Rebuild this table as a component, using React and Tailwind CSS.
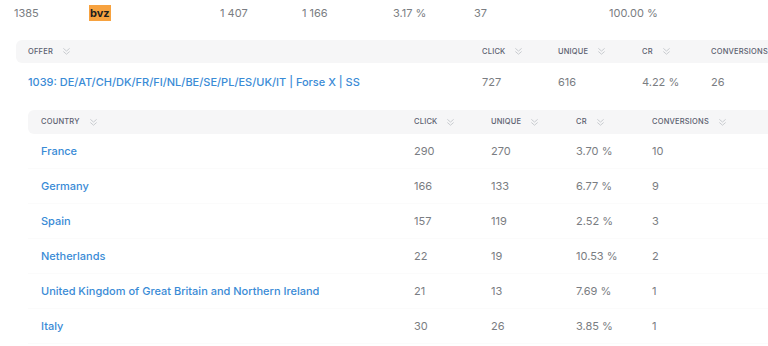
import React from 'react';

const SortIcon = () => (
  <svg className="w-[9px] h-[9px] ml-[9px] text-[#c4c7cc]" viewBox="0 0 10 10" fill="none" stroke="currentColor" strokeWidth={1}>
    <polyline points="1.5,1.5 5,4.5 8.5,1.5" />
    <polyline points="1.5,5 5,8 8.5,5" />
  </svg>
);

const Head = ({ label, className = '' }) => (
  <div className={`flex items-center ${className}`}>
    <span>{label}</span>
    <SortIcon />
  </div>
);

const countries = [
  { name: 'France', click: 290, unique: 270, cr: '3.70 %', conv: 10 },
  { name: 'Germany', click: 166, unique: 133, cr: '6.77 %', conv: 9 },
  { name: 'Spain', click: 157, unique: 119, cr: '2.52 %', conv: 3 },
  { name: 'Netherlands', click: 22, unique: 19, cr: '10.53 %', conv: 2 },
  { name: 'United Kingdom of Great Britain and Northern Ireland', click: 21, unique: 13, cr: '7.69 %', conv: 1 },
  { name: 'Italy', click: 30, unique: 26, cr: '3.85 %', conv: 1 },
];

export default function App() {
  return (
    <div className="w-[768px] h-[346px] overflow-hidden bg-white font-['Inter',sans-serif] text-[11px] text-[#7a7d82]">
      {/* parent row */}
      <div className="flex items-center h-[27px]">
        <div className="w-[89px] pl-[14px]">1385</div>
        <div className="w-[131px]">
          <span className="bg-[#f7a23f] text-[#1d1d1d] font-bold px-[1px] py-[1px]">bvz</span>
        </div>
        <div className="w-[82px]">1 407</div>
        <div className="w-[91px]">1 166</div>
        <div className="w-[81px]">3.17 %</div>
        <div className="w-[135px]">37</div>
        <div>100.00 %</div>
      </div>

      <div className="pl-[16px] pt-[13px]">
        {/* offer table header */}
        <div className="flex items-center h-[23px] bg-[#f6f6f7] rounded-l-[6px] pl-[12px] text-[7.5px] font-medium tracking-[0.2px] text-[#5b6070] whitespace-nowrap">
          <Head label="OFFER" className="w-[454px]" />
          <Head label="CLICK" className="w-[76px]" />
          <Head label="UNIQUE" className="w-[84px]" />
          <Head label="CR" className="w-[69px]" />
          <div>CONVERSIONS</div>
        </div>
        {/* offer row */}
        <div className="flex items-center h-[38px] pl-[12px]">
          <div className="w-[454px] text-[#3a8bd6] font-medium">1039: DE/AT/CH/DK/FR/FI/NL/BE/SE/PL/ES/UK/IT | Forse X | SS</div>
          <div className="w-[76px]">727</div>
          <div className="w-[84px]">616</div>
          <div className="w-[69px]">4.22 %</div>
          <div>26</div>
        </div>

        {/* country table */}
        <div className="pl-[12px] pt-[9px]">
          <div className="flex items-center h-[24px] bg-[#f6f6f7] rounded-l-[6px] pl-[13px] text-[7.5px] font-medium tracking-[0.2px] text-[#5b6070] whitespace-nowrap">
            <Head label="COUNTRY" className="w-[373px]" />
            <Head label="CLICK" className="w-[77px]" />
            <Head label="UNIQUE" className="w-[85px]" />
            <Head label="CR" className="w-[76px]" />
            <Head label="CONVERSIONS" />
          </div>
          {countries.map((c) => (
            <div key={c.name} className="flex items-center h-[35px] pl-[13px] border-b border-[#fbfbfb]">
              <div className="w-[373px] text-[#3a8bd6] font-medium">{c.name}</div>
              <div className="w-[77px]">{c.click}</div>
              <div className="w-[85px]">{c.unique}</div>
              <div className="w-[76px]">{c.cr}</div>
              <div>{c.conv}</div>
            </div>
          ))}
        </div>
      </div>
    </div>
  );
}
